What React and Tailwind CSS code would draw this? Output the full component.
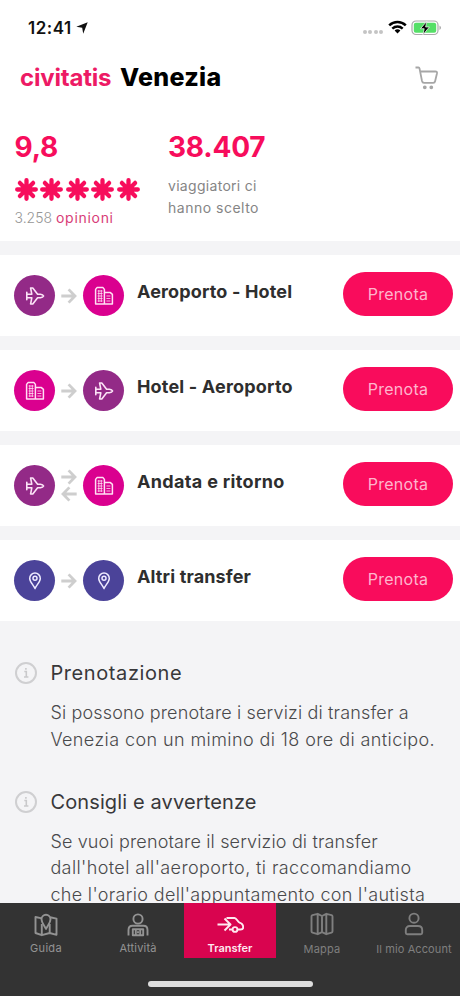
import React from "react";

const PINK = "#f70d5c";

function Plane() {
  return (
    <svg width="20" height="20" viewBox="0 0 20 20" fill="none" stroke="#fbe3f6" strokeWidth="1.6" strokeLinejoin="round" strokeLinecap="round">
      <path d="M1.800 6.300V13.700M1.800 8.200h5L5.600 2h2.200l4.800 6.200h2.800c1.600.2 2.800.9 3.200 1.800-.4.900-1.600 1.600-3.200 1.800h-2.800L7.800 18H5.600l1.200-6.200h-5" />
    </svg>
  );
}

function Building() {
  return (
    <svg width="20" height="20" viewBox="0 0 20 20" fill="none" stroke="#ffdff3" strokeWidth="1.5" strokeLinejoin="round">
      <path d="M1.600 18V3.400L3 1.600h6l1.400 1.800V18zM10.400 6.600h6L18.400 8.400V18h-8" />
      <path d="M3.600 5h5M3.600 7.500h5M3.600 10h5M3.600 12.500h5M3.600 15h5M4.800 4v12M7.300 4v12M12.400 10h4M12.400 12.500h4M12.400 15h4" strokeWidth=".8" />
    </svg>
  );
}

function Pin() {
  return (
    <svg width="20" height="20" viewBox="0 0 20 20" fill="none" stroke="#eeeaff" strokeWidth="1.500" strokeLinejoin="round">
      <path d="M10 17.600C8.600 14 4.700 10.800 4.700 7.400a5.300 5.300 0 0 1 10.600 0C15.300 10.800 11.400 14 10 17.600z" />
      <circle cx="10" cy="7.300" r="2" />
    </svg>
  );
}

function Arrow({ flip }) {
  return (
    <svg width="16" height="16" viewBox="0 0 16 16" fill="none" stroke="#cecece" strokeWidth="2.800" className={flip ? "rotate-180" : ""}>
      <path d="M.3 8H14M7.600 1.400 14 8l-6.400 6.600" />
    </svg>
  );
}

const icons = { plane: Plane, hotel: Building, pin: Pin };
const circle = { plane: "bg-[#932a87]", hotel: "bg-[#da008f]", pin: "bg-[#4b4399]" };

function Badge({ kind }) {
  const Icon = icons[kind];
  return (
    <div className={"flex size-[41px] shrink-0 items-center justify-center rounded-full " + circle[kind]}>
      <Icon />
    </div>
  );
}

function Transfer({ from, to, both, title, spacing }) {
  return (
    <section className="flex h-[81px] shrink-0 items-start bg-white pl-[14.400px] pr-[7px]">
      <div className="mt-[20px] flex h-[41px] items-center">
        <Badge kind={from} />
        <div className="flex w-[28px] flex-col items-center gap-px">
          <Arrow />
          {both && <Arrow flip />}
        </div>
        <Badge kind={to} />
      </div>
      <h2 className={"ml-[12.600px] mt-[25px] whitespace-nowrap text-[18px] leading-[24px] font-bold text-[#2e2e2e] " + spacing}>{title}</h2>
      <button className="ml-auto mt-[17px] h-[44px] w-[110px] rounded-full bg-[#f90c5c] text-[16px] tracking-[0.300px] text-[#ffb5cd]">Prenota</button>
    </section>
  );
}

function Info({ title, lines, titleSpacing }) {
  return (
    <article className="flex">
      <svg className="mt-[2px] mr-[13px] shrink-0" width="22" height="22" viewBox="0 0 22 22">
        <circle cx="11" cy="11" r="10" fill="none" stroke="#cfcfd1" strokeWidth="2" />
        <path d="M9.300 9.500h2v5.500M9 15h4.400M10.900 6v1.800" fill="none" stroke="#c9c9cb" strokeWidth="1.600" />
      </svg>
      <div className="whitespace-nowrap">
        <h3 className={"text-[20px] leading-[26px] text-[#38383a] " + titleSpacing}>{title}</h3>
        <div className="mt-[14px] text-[18px] leading-[26.800px] font-light text-[#49494b]">
          {lines.map(([text, spacing]) => (
            <p key={text} className={spacing}>{text}</p>
          ))}
        </div>
      </div>
    </article>
  );
}

function Star() {
  return (
    <svg width="23" height="23" viewBox="0 0 23 23" stroke={PINK} strokeWidth="4.300" strokeLinecap="round">
      <path d="M11.500 2.200v18.600M2.200 11.500h18.600M4.900 4.900l13.200 13.200M18.100 4.900 4.900 18.100" />
    </svg>
  );
}

const tabIcons = {
  guide: (
    <>
      <path d="M7.800 5.400 1.500 4v16l6.300 2.200 7.900-2.200 6.800 1.800V5.600l-6.400-1.400M7.800 11v11M15.700 11v9" />
      <path d="M12 16C10.500 12.500 7.500 9.800 7.500 6.300a4.500 4.500 0 0 1 9 0c0 3.500-3 6.200-4.500 9.700z" />
    </>
  ),
  activity: (
    <>
      <circle cx="12" cy="6" r="4.600" />
      <path d="M2.500 22.500V17c0-2.700 1.500-4.300 4-4.300h11c2.500 0 4 1.600 4 4.300v5.500M6.800 16.300h10.400v6H6.800zM9.800 16.300v6M14.200 16.300v6M12 18.300v2" />
    </>
  ),
  transfer: (
    <>
      <path d="M.5 11.500h12M7.500 5.500l6 6-6 6M9.500 5h8c2.200 0 3 4 5 4.600 2.600.8 3.700 1.800 3.700 4.600 0 1.600-.8 2.300-2.600 2.300h-2.600M15.400 16.500H12" />
      <circle cx="18" cy="16.500" r="2.400" />
    </>
  ),
  map: <path d="M1.500 4.500Q1.500 3.500 2.500 3.200L7.700 1.800 12 4l4.300-2.200 5.200 1.400q1 .3 1 1.300v14.800q0 1-1 1.300l-5.200 1.600-4.300-2-4.300 2-5.200-1.600q-1-.3-1-1.300zM7.700 2v20M12 4.200v16M16.300 2v20" />,
  account: (
    <>
      <circle cx="12" cy="6.200" r="4.600" />
      <path d="M8 14h8c2.700 0 4.200 1.500 4.200 4v2.800c0 1-.5 1.500-1.500 1.500H5.300c-1 0-1.500-.5-1.500-1.500V18c0-2.500 1.500-4 4.200-4z" />
    </>
  ),
};

const tabs = [
  { id: "guide", label: "Guida", style: "text-[#939393]", icon: "mt-[10px]", text: "mt-[4px] tracking-[0.300px]" },
  { id: "activity", label: "Attività", style: "text-[#939393]", icon: "mt-[10px]", text: "mt-[4px] tracking-[0.200px]" },
  { id: "transfer", label: "Transfer", style: "bg-[#d9044f] text-[#ffeaf1] font-semibold", icon: "mt-[10px]", text: "mt-[4px] tracking-[0px]" },
  { id: "map", label: "Mappa", style: "text-[#7f7f7f]", icon: "mt-[9px]", text: "mt-[6px] tracking-[0.200px]" },
  { id: "account", label: "Il mio Account", style: "text-[#7f7f7f]", icon: "mt-[9px]", text: "mt-[6px] tracking-[0.100px]" },
];

export default function App() {
  return (
    <main className="flex h-[996px] w-[460px] flex-col overflow-hidden bg-[#f4f4f6] font-['Inter','Liberation_Sans',sans-serif]">
      <header className="h-[241px] shrink-0 bg-white">
        <div className="flex h-[54px] items-center pl-[28px] pr-[19px]">
          <span className="mt-[3px] w-[45px] text-[17px] font-semibold tracking-[0.500px] text-[#111]">12:41</span>
          <svg className="ml-[3px] mt-[2px]" width="12" height="12" viewBox="0 0 12 12"><path d="M11.700.3 7.200 11.700 6.200 5.800.3 4.800z" fill="#111" /></svg>
          <div className="ml-auto mt-[10px] flex gap-[1.500px]">
            {[0, 1, 2, 3].map((n) => <i key={n} className="size-[4px] rounded-full bg-[#c4c4c4]" />)}
          </div>
          <svg className="ml-[5px]" width="19" height="14" viewBox="0 0 19 14" fill="none" stroke="#000" strokeWidth="2.500">
            <path d="M1.200 5.300C6 .8 13 .8 17.800 5.300M4.300 8.600C7.400 5.900 11.600 5.900 14.700 8.600" />
            <path d="m9.500 13.500-2.900-3a4.500 4.500 0 0 1 5.800 0z" fill="#000" stroke="none" />
          </svg>
          <svg className="ml-[4px] mt-px" width="30" height="16" viewBox="0 0 30 16">
            <rect x="1" y="1" width="26" height="13.500" rx="4" fill="none" stroke="#aaa" strokeWidth="1.200" />
            <rect x="2.800" y="2.800" width="22.400" height="9.900" rx="2" fill="#55df67" />
            <path d="M28.600 5.500c1.500 1 1.500 3.500 0 4.500z" fill="#888" />
            <path d="m15.800 1.300-6.300 7.400h3.700l-1.200 6 6.400-7.700h-3.800z" fill="#000" stroke="#fff" strokeWidth=".7" />
          </svg>
        </div>
        <div className="flex h-[46px] items-center pl-[20px] pr-[21px]">
          <h1 className="mt-[2px] flex items-baseline whitespace-nowrap">
            <span className="w-[100px] text-[24px] font-bold tracking-[-0.200px] text-[#ed1a65]">civitatis</span>
            <span className="text-[25px] font-extrabold tracking-[0.300px] text-black">Venezia</span>
          </h1>
          <svg className="ml-auto mt-px" width="24" height="24" viewBox="0 0 24 24" fill="none" stroke="#a6a6a6" strokeWidth="1.800" strokeLinejoin="round">
            <path d="M.5 1.500H3.500Q4.300 1.500 4.500 2.400L7 15q.4 1.800 2 1.800h9.300q1.500 0 1.800-1.500L22 7.200Q22.300 5.500 20.500 5.500H5.200" /><circle cx="9.800" cy="21.300" r="1" fill="#a6a6a6" /><circle cx="16.300" cy="21.300" r="1" fill="#a6a6a6" />
          </svg>
        </div>
        <div className="flex pl-[14.500px] pt-[29px]">
          <div className="w-[152.500px]">
            <p className="text-[28px] leading-[36px] font-bold tracking-[-0.200px] text-[#f70d5c]">9,8</p>
            <div className="mt-[12.500px] flex gap-[2.600px]">{[0, 1, 2, 3, 4].map((n) => <Star key={n} />)}</div>
            <p className="mt-[7.500px] whitespace-nowrap text-[14px] leading-[20px] font-light text-[#969696]">3.258 <span className="font-normal tracking-[0.700px] text-[#d83c77]">opinioni</span></p>
          </div>
          <div className="pl-px">
            <p className="text-[28px] leading-[36px] font-bold tracking-[-0.200px] text-[#f70d5c]">38.407</p>
            <p className="mt-[10px] text-[14px] leading-[22px] text-[#858585]"><span className="tracking-[0.300px]">viaggiatori ci</span><br /><span className="tracking-[0.500px]">hanno scelto</span></p>
          </div>
        </div>
      </header>

      <div className="mt-[14px] flex shrink-0 flex-col gap-[14px]">
        <Transfer from="plane" to="hotel" title="Aeroporto - Hotel" spacing="tracking-[0.150px]" />
        <Transfer from="hotel" to="plane" title="Hotel - Aeroporto" spacing="tracking-[0.180px]" />
        <Transfer from="plane" to="hotel" both title="Andata e ritorno" spacing="tracking-[0.330px]" />
        <Transfer from="pin" to="pin" title="Altri transfer" spacing="tracking-[0.150px]" />
      </div>

      <div className="flex min-h-0 flex-1 flex-col gap-[35px] overflow-hidden pl-[15.400px] pt-[39px]">
        <Info title="Prenotazione" titleSpacing="tracking-[0.600px]" lines={[
          ["Si possono prenotare i servizi di transfer a", "tracking-[0.150px]"],
          ["Venezia con un mimino di 18 ore di anticipo.", "tracking-[0.410px]"],
        ]} />
        <Info title="Consigli e avvertenze" titleSpacing="tracking-[0.130px]" lines={[
          ["Se vuoi prenotare il servizio di transfer", "tracking-[0.150px]"],
          ["dall'hotel all'aeroporto, ti raccomandiamo", "tracking-[0.390px]"],
          ["che l'orario dell'appuntamento con l'autista", "tracking-[0.330px]"],
        ]} />
      </div>

      <footer className="h-[93px] shrink-0 bg-[#333]">
        <nav className="grid h-[55px] grid-cols-5">
          {tabs.map((t) => (
            <div key={t.id} className={"flex flex-col items-center " + t.style}>
              <svg className={t.icon} width={t.id === "transfer" ? 27 : 24} height="24" viewBox={t.id === "transfer" ? "0 0 27 24" : "0 0 24 24"} fill="none" stroke="currentColor" strokeWidth="1.900" strokeLinejoin="round">{tabIcons[t.id]}</svg>
              <span className={"whitespace-nowrap text-[11px] leading-[14px] " + t.text}>{t.label}</span>
            </div>
          ))}
        </nav>
        <div className="mx-auto mt-[23px] h-[6px] w-[165px] rounded-full bg-[#dedede]" />
      </footer>
    </main>
  );
}
